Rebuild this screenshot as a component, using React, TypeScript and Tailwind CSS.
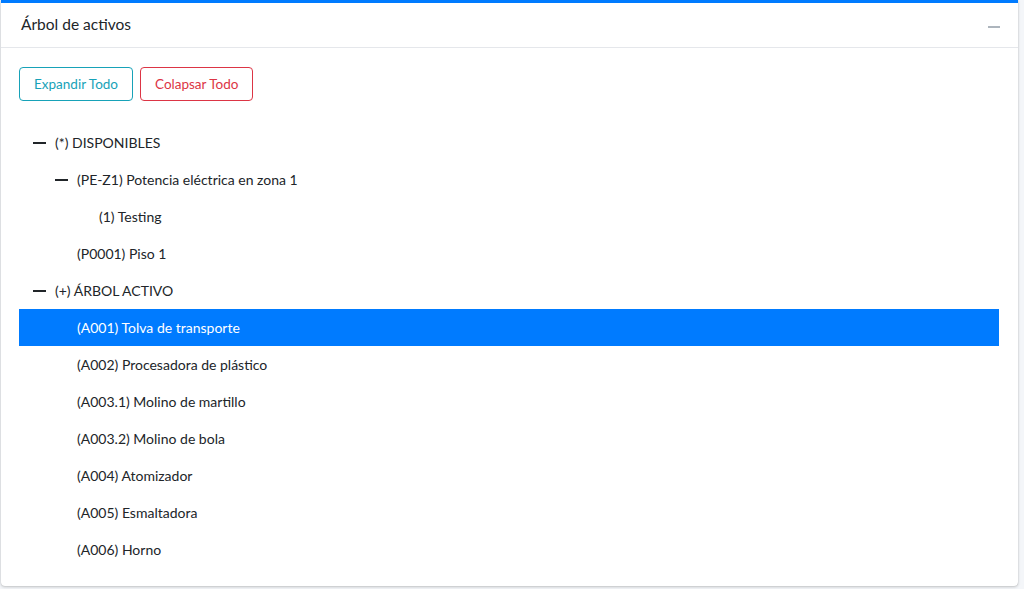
import React from "react";

type Node = { label: string; level: number; open?: boolean; selected?: boolean };

const nodes: Node[] = [
  { label: "(*) DISPONIBLES", level: 0, open: true },
  { label: "(PE-Z1) Potencia eléctrica en zona 1", level: 1, open: true },
  { label: "(1) Testing", level: 2 },
  { label: "(P0001) Piso 1", level: 1 },
  { label: "(+) ÁRBOL ACTIVO", level: 0, open: true },
  { label: "(A001) Tolva de transporte", level: 1, selected: true },
  { label: "(A002) Procesadora de plástico", level: 1 },
  { label: "(A003.1) Molino de martillo", level: 1 },
  { label: "(A003.2) Molino de bola", level: 1 },
  { label: "(A004) Atomizador", level: 1 },
  { label: "(A005) Esmaltadora", level: 1 },
  { label: "(A006) Horno", level: 1 },
];

const indents = ["pl-[14px]", "pl-[36px]", "pl-[58px]"];

export default function App() {
  return (
    <div className="h-[589px] w-[1024px] overflow-hidden bg-[#f4f6f9] font-['Lato','Noto_Sans',sans-serif] text-[#212529]">
      <div className="ml-px w-[1017px] rounded-b border-t-[3px] border-[#007bff] bg-white shadow-[0_0_1px_rgba(0,0,0,0.2),0_1px_3px_rgba(0,0,0,0.2)]">
        {/* header */}
        <div className="flex h-[45px] items-center justify-between border-b border-[#e5e7eb] pl-[20px] pr-[18px]">
          <h3 className="text-[15.5px]">Árbol de activos</h3>
          <span className="mt-[3px] block h-[2px] w-[12px] bg-[#adb5bd]" />
        </div>

        {/* body */}
        <div className="px-[18px] pb-[18px] pt-[19px]">
          <div className="flex gap-[7px]">
            <button className="h-[34px] rounded border border-[#17a2b8] px-[14px] text-[13.5px] text-[#17a2b8]">
              Expandir Todo
            </button>
            <button className="h-[34px] rounded border border-[#dc3545] px-[14px] text-[13.5px] text-[#dc3545]">
              Colapsar Todo
            </button>
          </div>

          <ul className="mt-[23px] w-[980px]">
            {nodes.map((n) => (
              <li
                key={n.label}
                className={`flex h-[37px] items-center text-[14px] ${indents[n.level]} ${
                  n.selected ? "bg-[#007bff] text-white" : ""
                }`}
              >
                <span className="flex w-[22px] shrink-0 items-center">
                  {n.open && <span className="block h-[2px] w-[13px] bg-[#212529]" />}
                </span>
                <span>{n.label}</span>
              </li>
            ))}
          </ul>
        </div>
      </div>
    </div>
  );
}
